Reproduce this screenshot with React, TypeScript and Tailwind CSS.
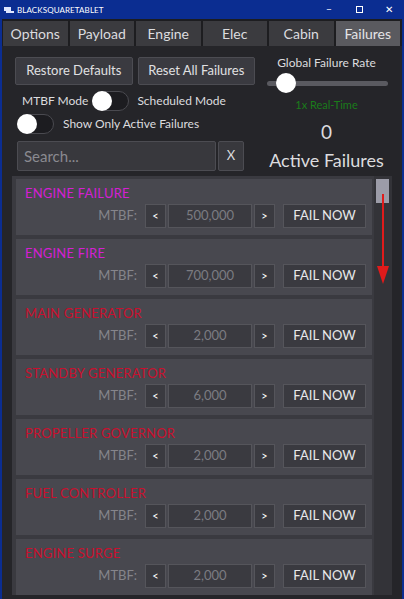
import React from 'react';

const failures = [
  { name: 'ENGINE FAILURE', value: '500,000', color: 'text-[#d41fd4]' },
  { name: 'ENGINE FIRE', value: '700,000', color: 'text-[#d41fd4]' },
  { name: 'MAIN GENERATOR', value: '2,000', color: 'text-[#c8102e]' },
  { name: 'STANDBY GENERATOR', value: '6,000', color: 'text-[#c8102e]' },
  { name: 'PROPELLER GOVERNOR', value: '2,000', color: 'text-[#c8102e]' },
  { name: 'FUEL CONTROLLER', value: '2,000', color: 'text-[#c8102e]' },
  { name: 'ENGINE SURGE', value: '2,000', color: 'text-[#c8102e]' },
];

const tabs = ['Options', 'Payload', 'Engine', 'Elec', 'Cabin', 'Failures'];

function Toggle() {
  return (
    <div className="relative w-[37px] h-[20px] rounded-full border border-[#4a4a50] bg-[#1c1c20]">
      <div className="absolute left-[-1px] top-[-1px] w-[20px] h-[20px] rounded-full bg-white" />
    </div>
  );
}

function FailureRow({ item }: { item: (typeof failures)[number] }) {
  return (
    <div className="bg-[#48484f] h-[56px] pl-[9px] pr-[6px] pt-[6px] flex flex-col">
      <div className={`${item.color} text-[13px] leading-[16px] tracking-[0.2px]`}>{item.name}</div>
      <div className="flex items-center justify-end mt-[3px]">
        <span className="text-[#85858b] text-[13px] mr-[8px]">MTBF:</span>
        <div className="w-[21px] h-[24px] bg-[#3a3a40] border border-[#55555b] flex items-center justify-center text-white text-[11px]">
          &lt;
        </div>
        <div className="ml-[2px] w-[84px] h-[24px] bg-[#3a3a40] border border-[#55555b] flex items-center justify-center text-[#7c7c82] text-[13px]">
          {item.value}
        </div>
        <div className="ml-[2px] w-[21px] h-[24px] bg-[#3a3a40] border border-[#55555b] flex items-center justify-center text-white text-[11px]">
          &gt;
        </div>
        <div className="ml-[8px] w-[83px] h-[24px] bg-[#3a3a40] border border-[#55555b] flex items-center justify-center text-[#e8e8ea] text-[13px]">
          FAIL NOW
        </div>
      </div>
    </div>
  );
}

export default function App() {
  return (
    <div
      className="w-[404px] h-[599px] bg-[#0b2d91] flex flex-col overflow-hidden"
      style={{ fontFamily: 'Lato, "Open Sans", sans-serif' }}
    >
      {/* Title bar */}
      <div className="h-[19px] flex items-center pl-[4px] text-white shrink-0">
        <svg width="10" height="8" viewBox="0 0 10 8" className="mr-[3px]">
          <rect x="0" y="1" width="7" height="4" fill="#dfe6ff" />
          <rect x="2" y="5" width="8" height="2" fill="#dfe6ff" />
        </svg>
        <span className="text-[8px] tracking-[0.1px]">BLACKSQUARETABLET</span>
        <div className="ml-auto flex items-center text-[10px]">
          <span className="w-[30px] text-center">−</span>
          <span className="w-[30px] flex justify-center">
            <span className="w-[7px] h-[7px] border border-white" />
          </span>
          <span className="w-[30px] text-center">✕</span>
        </div>
      </div>

      <div className="flex-1 mx-[2px] mb-[2px] bg-[#252529] flex flex-col">
        {/* Tabs */}
        <div className="grid grid-cols-6 gap-[2px] pl-[1px] pr-[2px] pt-[2px] h-[27px] bg-[#1d1d20]">
          {tabs.map((tab) => (
            <div
              key={tab}
              className={`flex items-center justify-center text-[14px] ${
                tab === 'Failures' ? 'bg-[#5a5a5f] text-[#e4e4e6]' : 'bg-[#3b3b3f] text-[#dcdcdf]'
              }`}
            >
              {tab}
            </div>
          ))}
        </div>

        {/* Controls */}
        <div className="flex pl-[12px] pr-[12px] pt-[11px]">
          <div className="flex flex-col w-[241px]">
            <div className="flex gap-[5px] pl-[1px]">
              <div className="w-[118px] h-[28px] bg-[#3a3a40] border border-[#4c4c52] rounded-[2px] flex items-center justify-center text-[#e0e0e2] text-[13px]">
                Restore Defaults
              </div>
              <div className="w-[118px] h-[28px] bg-[#3a3a40] border border-[#4c4c52] rounded-[2px] flex items-center justify-center text-[#e0e0e2] text-[13px]">
                Reset All Failures
              </div>
            </div>
            <div className="flex items-center mt-[6px] pl-[8px] text-[#dcdcdf] text-[12px]">
              <span>MTBF Mode</span>
              <div className="ml-[4px]">
                <Toggle />
              </div>
              <span className="ml-[8px]">Scheduled Mode</span>
            </div>
            <div className="flex items-center mt-[3px] pl-[3px] gap-[9px] text-[#dcdcdf] text-[12px]">
              <Toggle />
              <span>Show Only Active Failures</span>
            </div>
            <div className="flex mt-[7px] pl-[3px] gap-[2px]">
              <div className="w-[199px] h-[30px] bg-[#38383d] border border-[#4c4c52] rounded-[2px] flex items-center px-[6px] text-[#8a8a90] text-[15px]">
                Search...
              </div>
              <div className="w-[26px] h-[30px] bg-[#38383d] border border-[#4c4c52] rounded-[2px] flex items-center justify-center text-[#dcdcdf] text-[13px]">
                X
              </div>
            </div>
          </div>
          <div className="flex-1 flex flex-col items-center text-[#dcdcdf]">
            <div className="text-[12px] mt-[-3px] ml-[8px]">Global Failure Rate</div>
            <div className="relative w-[121px] h-[20px] ml-[10px] mt-[1px] flex items-center">
              <div className="w-full h-[5px] rounded-full bg-[#5a5a60]" />
              <div className="absolute left-[9px] top-0 w-[20px] h-[20px] rounded-full bg-white" />
            </div>
            <div className="text-[11px] text-[#1a7c1a] mt-[4px] ml-[8px]">1x Real-Time</div>
            <div className="text-[19px] leading-[22px] mt-[7px] ml-[8px]">0</div>
            <div className="text-[18px] leading-[22px] mt-[6px] ml-[8px]">Active Failures</div>
          </div>
        </div>

        {/* Failure list */}
        <div className="flex-1 mt-[5px] mx-[10px] mb-[6px] bg-[#3a3a40] flex overflow-hidden">
          <div className="flex-1 flex flex-col gap-[4px] pl-[4px] pr-[2px] pt-[3px]">
            {failures.map((f) => (
              <FailureRow key={f.name} item={f} />
            ))}
          </div>
          <div className="relative w-[18px] bg-[#333338]">
            <div className="absolute left-[2px] top-[3px] w-[13px] h-[24px] bg-[#9c9ca8]" />
            <svg className="absolute left-0 top-[18px]" width="18" height="92" viewBox="0 0 18 92">
              <line x1="9" y1="0" x2="9" y2="80" stroke="#e01b1b" strokeWidth="2" />
              <polygon points="3,72 15,72 9,90" fill="#e01b1b" />
            </svg>
          </div>
        </div>
      </div>
    </div>
  );
}
